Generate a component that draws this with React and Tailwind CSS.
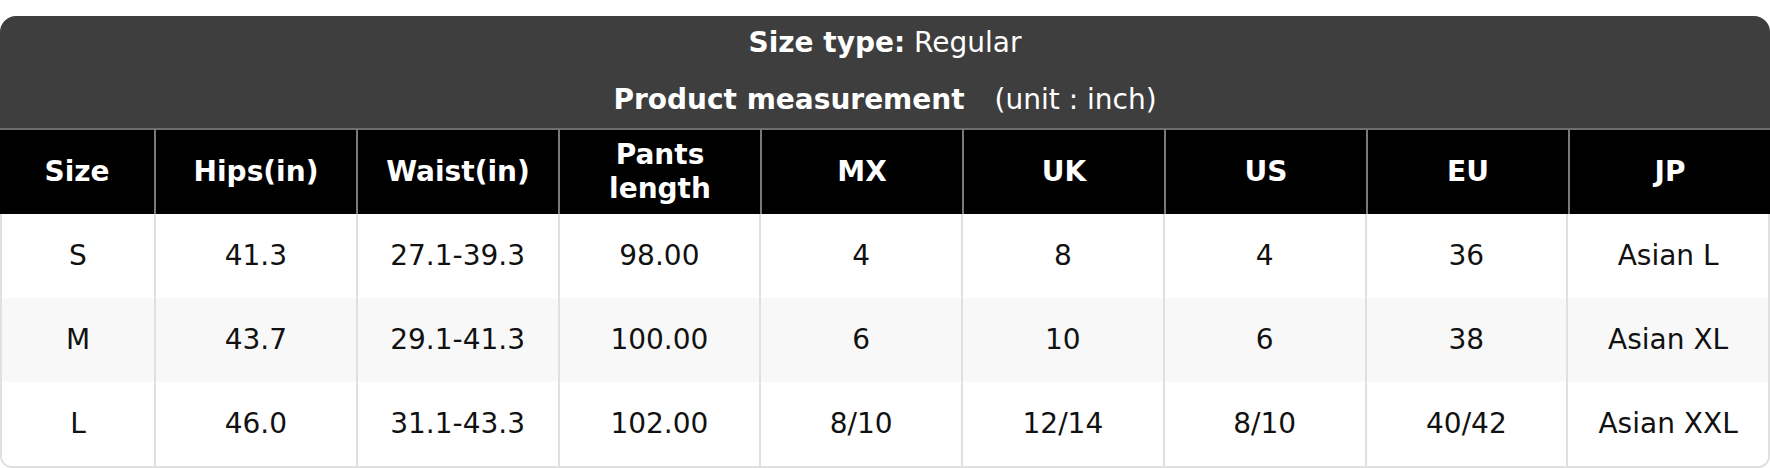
const columns = ["Size", "Hips(in)", "Waist(in)", "Pants length", "MX", "UK", "US", "EU", "JP"];

const rows = [
  ["S", "41.3", "27.1-39.3", "98.00", "4", "8", "4", "36", "Asian L"],
  ["M", "43.7", "29.1-41.3", "100.00", "6", "10", "6", "38", "Asian XL"],
  ["L", "46.0", "31.1-43.3", "102.00", "8/10", "12/14", "8/10", "40/42", "Asian XXL"],
];

export default function App() {
  return (
    <div className="bg-white pt-[16px] font-['DejaVu_Sans',sans-serif] text-[28px]">
      <div className="rounded-t-[16px] overflow-hidden">
        {/* Title band */}
        <div className="bg-[#3e3e3e] text-white text-center pt-[7px] pb-[8px] border-b-2 border-[#6e6e6e]">
          <div className="leading-[40px]">
            <span className="font-bold">Size type:</span> Regular
          </div>
          <div className="leading-[40px] mt-[17px]">
            <span className="font-bold">Product measurement</span>
            <span className="ml-[30px]">(unit : inch)</span>
          </div>
        </div>

        {/* Header row */}
        <div className="grid grid-cols-[154px_repeat(8,1fr)] bg-black text-white font-bold h-[84px]">
          {columns.map((col, i) => (
            <div
              key={col}
              className={`flex items-center justify-center text-center leading-[34px] ${
                i > 0 ? "border-l-2 border-[#7a7a7a]" : ""
              }`}
            >
              {col === "Pants length" ? (
                <span>
                  Pants
                  <br />
                  length
                </span>
              ) : (
                col
              )}
            </div>
          ))}
        </div>
      </div>

      {/* Body */}
      <div className="border-x-2 border-b-2 border-[#e0e0e0] rounded-b-[12px] overflow-hidden text-[#111]">
        {rows.map((row, r) => (
          <div
            key={r}
            className={`grid grid-cols-[152px_repeat(8,1fr)] ${r === 1 ? "bg-[#f8f8f8]" : "bg-white"} h-[84px]`}
          >
            {row.map((cell, i) => (
              <div
                key={i}
                className={`flex items-center justify-center ${i > 0 ? "border-l-2 border-[#e0e0e0]" : ""}`}
              >
                {cell}
              </div>
            ))}
          </div>
        ))}
      </div>
    </div>
  );
}
